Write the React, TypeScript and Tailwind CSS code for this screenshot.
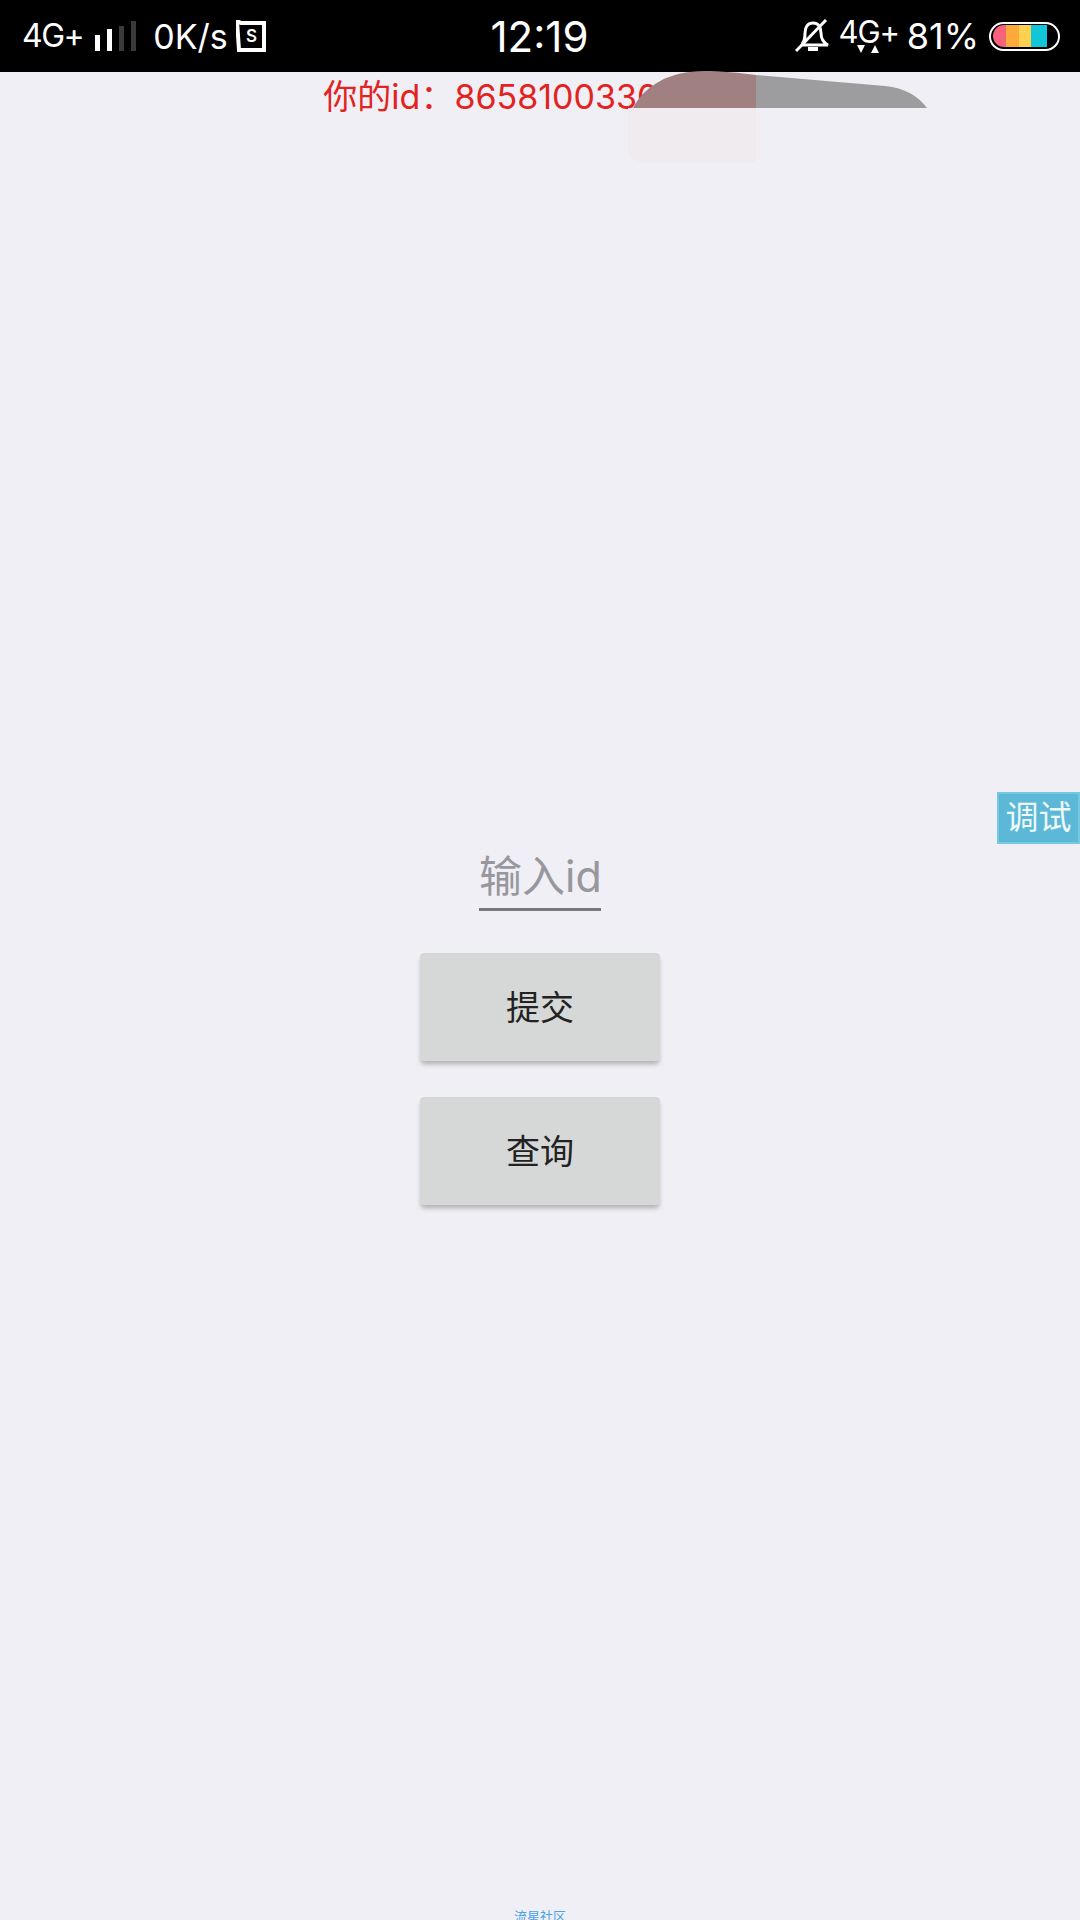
const font = "font-['Inter','Noto_Sans_CJK_SC',sans-serif]";

function SignalBars() {
  return (
    <div className="flex items-end gap-[7px] h-[30px] ml-3 mt-[-1px]">
      <div className="w-[5px] h-[16px] bg-white" />
      <div className="w-[5px] h-[22px] bg-white" />
      <div className="w-[5px] h-[25px] bg-[#3a3a3a]" />
      <div className="w-[5px] h-[30px] bg-[#3a3a3a]" />
    </div>
  );
}

function SimIcon() {
  return (
    <svg width="30" height="32" viewBox="0 0 30 32" className="ml-[8px]">
      <path d="M1 1 L5 3 H28 V30 H3 Z" fill="none" stroke="#fff" strokeWidth="4" />
      <text x="15.5" y="22" textAnchor="middle" fill="#fff" fontSize="17" fontWeight="600" fontFamily="Inter, sans-serif">
        S
      </text>
    </svg>
  );
}

function BellOff() {
  return (
    <svg width="36" height="34" viewBox="0 0 36 34" fill="none" stroke="#fff" strokeWidth="3">
      <path d="M7 25 C10 22 10 19 10 14 C10 8 13 4 18 4 C23 4 26 8 26 14 C26 19 27 23 33 26 H6" />
      <path d="M13 30 H23" strokeWidth="4" />
      <path d="M1 32 L31 1" />
    </svg>
  );
}

function Battery() {
  return (
    <div className="w-[71px] h-[29px] rounded-full border-[2.5px] border-white p-[1.5px] ml-[10px]">
      <div className="flex h-full w-[61px] rounded-l-full overflow-hidden">
        <div className="w-[13px] bg-[#f9627d]" />
        <div className="w-[13px] bg-[#fdaa3c]" />
        <div className="w-[12px] bg-[#fdd150]" />
        <div className="w-[16px] bg-[#10c6d8]" />
      </div>
    </div>
  );
}

function StatusBar() {
  return (
    <div className="h-[72px] bg-black text-white grid grid-cols-[1fr_auto_1fr] items-center pl-[22px] pr-5 shrink-0">
      <div className="flex items-center">
        <span className="text-[32px] tracking-[-1.5px]">4G+</span>
        <SignalBars />
        <span className="text-[34px] ml-[17px]">0K/s</span>
        <SimIcon />
      </div>
      <div className="text-[42px] leading-none mt-[2px] mr-[3px]">12:19</div>
      <div className="flex items-center justify-end">
        <BellOff />
        <div className="flex flex-col items-center ml-[8px] w-[60px]">
          <span className="text-[31px] leading-[26px] tracking-[-1px]">4G+</span>
          <svg width="24" height="9" viewBox="0 0 24 9" fill="#fff">
            <path d="M0 0 H8 L4 8 Z" />
            <path d="M14 8 L18 0 L22 8 Z" />
          </svg>
        </div>
        <span className="text-[36px] ml-[8px]">81%</span>
        <Battery />
      </div>
    </div>
  );
}

export default function App() {
  return (
    <div className={`relative w-[1080px] h-[1920px] overflow-hidden bg-[#f0eff5] flex flex-col ${font}`}>
      <StatusBar />

      <div className="flex-1 flex flex-col items-center">
        <p className="text-[34px] leading-[50px] text-[#e2231f] whitespace-nowrap">你的id：865810033012345</p>

        <input
          placeholder="输入id"
          className="w-[122px] h-[62px] mt-[727px] pb-[4px] text-center text-[43px] bg-transparent outline-none border-b-[3px] border-[#77777d] placeholder:text-[#97979d]"
        />

        <button className="w-[240px] h-[108px] mt-[42px] rounded bg-[#d6d7d7] text-[34px] text-[#222] shadow-[0_4px_5px_-1px_rgba(0,0,0,0.28)]">
          提交
        </button>
        <button className="w-[240px] h-[108px] mt-[36px] rounded bg-[#d6d7d7] text-[34px] text-[#222] shadow-[0_4px_5px_-1px_rgba(0,0,0,0.28)]">
          查询
        </button>

        <p className="mt-auto text-[13px] leading-[13px] text-[#4aa3e8] mb-[-3px]">流星社区</p>
      </div>

      {/* leftover overlay on top of the id line */}
      <div className="absolute left-[628px] top-[108px] w-[128px] h-[54px] bg-[#f0ebef] rounded-bl-[14px]" />
      <svg width="300" height="38" viewBox="628 71 300 38" className="absolute left-[628px] top-[71px]">
        <path d="M633 108 C645 85 670 71 704 71 C720 71 740 73 756 75 L756 108 Z" fill="#a08080" />
        <path d="M756 75 L885 86 C905 88 918 96 927 108 L756 108 Z" fill="#9d9d9f" />
      </svg>

      <div className="absolute right-0 top-[792px] w-[83px] h-[52px] flex items-center justify-center bg-[#5cb8d6] border-2 border-[#74c8e0] text-[33px] text-[#eef8fb]">
        调试
      </div>
    </div>
  );
}
